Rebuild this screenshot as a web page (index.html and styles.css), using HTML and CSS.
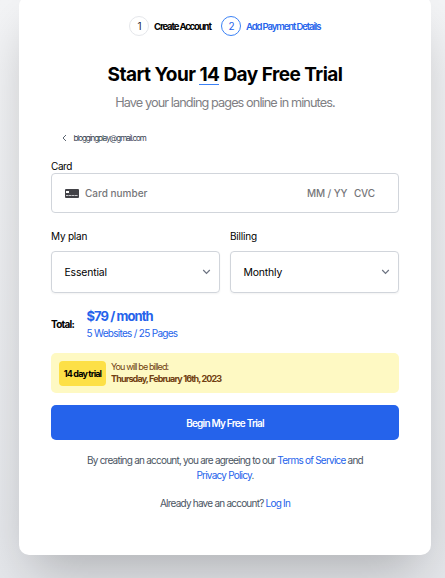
FILE: index.html
```html
<!DOCTYPE html>
<html lang="en">
<head>
  <meta charset="UTF-8" />
  <meta name="viewport" content="width=device-width, initial-scale=1.0"/>
  <title>Start Your Free Trial</title>
  <link rel="stylesheet" href="styles.css">
</head>
<body>
  <main class="signup-card">
    <div class="steps">
      <span class="step-number">1</span>
      <span class="step-label">Create Account</span>
      <span class="step-number active">2</span>
      <span class="step-label active">Add Payment Details</span>
    </div>

    <h1>Start Your <span class="days">14</span> Day Free Trial</h1>
    <p class="subtitle">Have your landing pages online in minutes.</p>

    <a class="back-link" href="#">
      <svg width="5" height="8" viewBox="0 0 5 8" fill="none" stroke="#4b5563" stroke-width="0.9"><path d="M4 1L1 4l3 3"/></svg>
      <span>bloggingplay@gmail.com</span>
    </a>

    <form>
      <div class="card-label">Card</div>
      <div class="card-input">
        <svg width="14" height="9" viewBox="0 0 14 9">
          <rect width="14" height="9" rx="1" fill="#424247"/>
          <rect x="1" y="2" width="3" height="2" fill="#fff"/>
          <path d="M1 6.5h12" stroke="#c8c8cb" stroke-width="1" stroke-dasharray="2.6 .4"/>
        </svg>
        <span class="card-number">Card number</span>
        <span class="card-expiry">MM / YY</span>
        <span class="card-cvc">CVC</span>
      </div>

      <div class="options">
        <div class="option">
          <div class="option-label">My plan</div>
          <div class="select">
            <span>Essential</span>
            <svg width="9" height="6" viewBox="0 0 9 6" fill="none" stroke="#6b7280" stroke-width="1.2"><path d="M1.2 1l3.3 3.3L7.8 1"/></svg>
          </div>
        </div>
        <div class="option">
          <div class="option-label">Billing</div>
          <div class="select">
            <span>Monthly</span>
            <svg width="9" height="6" viewBox="0 0 9 6" fill="none" stroke="#6b7280" stroke-width="1.2"><path d="M1.2 1l3.3 3.3L7.8 1"/></svg>
          </div>
        </div>
      </div>

      <div class="total">
        <span class="total-label">Total:</span>
        <div>
          <div class="price">$79 / month</div>
          <div class="limits">5 Websites / 25 Pages</div>
        </div>
      </div>

      <div class="trial">
        <span class="trial-badge">14 day trial</span>
        <div class="trial-text">
          <div class="trial-note">You will be billed:</div>
          <div class="trial-date">Thursday, February 16th, 2023</div>
        </div>
      </div>

      <button type="button"><span>Begin My Free Trial</span></button>
    </form>

    <p class="terms">By creating an account, you are agreeing to our <a href="#">Terms of Service</a> and<br><a href="#">Privacy Policy</a>.</p>
    <p class="login">Already have an account? <a href="#">Log In</a></p>
  </main>
</body>
</html>
```
FILE: styles.css
```css
* {
  box-sizing: border-box;
}
body {
  margin: 0;
  height: 578px;
  overflow: hidden;
  background: linear-gradient(#f3f4f6, #e5e7eb);
  font-family: Inter, sans-serif;
  color: #000;
  white-space: nowrap;
}
a {
  color: #2563eb;
  text-decoration: none;
}
.signup-card {
  width: 412px;
  height: 559px;
  margin: -4px 0 0 19px;
  padding: 20px 32px 0;
  background: #fff;
  border-radius: 10px;
  box-shadow: 0 25px 50px -12px rgba(0, 0, 0, 0.25);
}
.steps {
  display: flex;
  align-items: center;
  height: 20px;
  padding-left: 78px;
}
.step-number {
  width: 20px;
  height: 20px;
  border: 1px solid #e5e7eb;
  border-radius: 50%;
  font-size: 10px;
  line-height: 18px;
  text-align: center;
  text-indent: 1px;
  color: #1f2937;
}
.step-number.active {
  border-color: #3b82f6;
  color: #2563eb;
}
.step-label {
  width: 67px;
  margin-left: 5px;
  font-size: 9.5px;
  font-weight: 700;
  letter-spacing: -1.12px;
}
.step-label.active {
  font-weight: 600;
  letter-spacing: -1.1px;
  color: #2563eb;
}
h1 {
  margin: 26px 0 0;
  font-size: 19px;
  line-height: 26px;
  font-weight: 700;
  letter-spacing: -0.52px;
  text-align: center;
}
.days {
  display: inline-block;
  height: 22px;
  line-height: 24px;
  border-bottom: 1px solid #3b82f6;
}
.subtitle {
  margin: 6px 0 0;
  font-size: 12.7px;
  line-height: 18px;
  font-weight: 400;
  letter-spacing: -0.9px;
  text-align: center;
  color: #808084;
}
.back-link {
  display: flex;
  align-items: center;
  gap: 6.5px;
  height: 12px;
  margin: 20px 0 0 11px;
  font-size: 8px;
  letter-spacing: -1.05px;
  color: #374151;
}
.card-label {
  margin-top: 15px;
  font-size: 10px;
  line-height: 14px;
  letter-spacing: -0.4px;
}
.card-input {
  display: flex;
  align-items: center;
  height: 40px;
  padding: 0 23px 0 13px;
  border: 1px solid #d1d5db;
  border-radius: 4px;
  font-size: 10px;
  font-weight: 500;
  color: #757579;
}
.card-number {
  margin: 0 auto 0 6px;
}
.card-cvc {
  margin-left: 6.5px;
}
.card-expiry, .card-cvc {
  letter-spacing: -0.1px;
}
.options {
  display: flex;
  gap: 10px;
  margin-top: 15px;
}
.option {
  width: 169px;
}
.option-label {
  font-size: 10px;
  line-height: 16px;
  letter-spacing: -0.2px;
}
.select {
  display: flex;
  align-items: center;
  justify-content: space-between;
  height: 42px;
  margin-top: 7px;
  padding: 0 8px 0 12.5px;
  border: 1px solid #d1d5db;
  border-radius: 4px;
  font-size: 10.4px;
  letter-spacing: -0.15px;
  box-shadow: 0 1px 2px rgba(0, 0, 0, 0.05);
}
.total {
  display: flex;
  align-items: center;
  height: 32px;
  margin-top: 15px;
  color: #2563eb;
}
.total-label {
  width: 35.5px;
  font-size: 10px;
  font-weight: 700;
  letter-spacing: -0.75px;
  color: #000;
}
.price {
  padding-top: 2px;
  font-size: 13px;
  line-height: 16px;
  font-weight: 700;
  letter-spacing: -0.92px;
}
.limits {
  font-size: 10px;
  line-height: 18px;
  letter-spacing: -0.7px;
}
.trial {
  display: flex;
  align-items: center;
  height: 40px;
  margin-top: 13px;
  padding-left: 8px;
  border-radius: 5px;
  background-color: #fef9c3;
}
.trial-badge {
  width: 47px;
  height: 25px;
  border-radius: 4px;
  background-color: #fde047;
  font-size: 9px;
  line-height: 25px;
  font-weight: 700;
  letter-spacing: -0.84px;
  text-align: center;
}
.trial-text {
  margin-left: 5px;
  font-size: 9px;
  line-height: 12px;
  color: #713f12;
}
.trial-note {
  letter-spacing: -0.87px;
}
.trial-date {
  font-weight: 700;
  letter-spacing: -0.86px;
}
button {
  display: block;
  width: 100%;
  height: 35px;
  margin-top: 12px;
  padding: 0;
  border: none;
  border-radius: 5px;
  background-color: #2563eb;
  color: #fff;
  font-family: inherit;
  font-size: 10px;
  font-weight: 600;
  letter-spacing: -0.78px;
}
.terms, .login {
  margin: 13px 0 0;
  font-size: 10px;
  line-height: 15px;
  letter-spacing: -0.77px;
  text-align: center;
  color: #4b5563;
}
```
